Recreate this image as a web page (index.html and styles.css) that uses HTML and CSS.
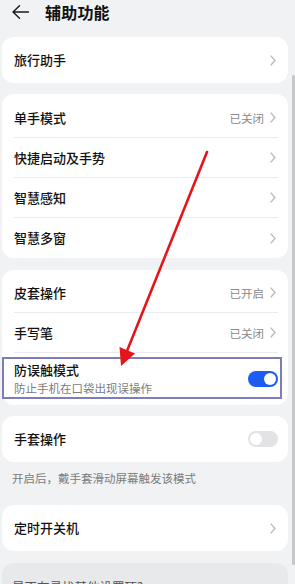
FILE: index.html
```html
<!DOCTYPE html>
<html lang="zh-CN">
<head>
<meta charset="utf-8">
<link rel="stylesheet" href="styles.css">
</head>
<body>
<div class="page">
  <header class="header">
    <svg class="back" width="17" height="14" viewBox="0 0 17 14"><path d="M16.5 7 H1 M7.5 0.8 L1 7 L7.5 13.2" fill="none" stroke="#1a1a1a" stroke-width="1.4" stroke-linecap="round" stroke-linejoin="round"/></svg>
    <h1 class="title">辅助功能</h1>
  </header>

  <main class="list">
    <section class="card">
      <div class="row single"><span class="label">旅行助手</span><span class="end"><svg class="chev" width="6" height="11" viewBox="0 0 6 11"><path d="M1 1 L5 5.5 L1 10" fill="none" stroke="#b9b9b9" stroke-width="1.2" stroke-linecap="round" stroke-linejoin="round"/></svg></span></div>
    </section>

    <section class="card group">
      <div class="row"><span class="label">单手模式</span><span class="end"><span class="value">已关闭</span><svg class="chev" width="6" height="11" viewBox="0 0 6 11"><path d="M1 1 L5 5.5 L1 10" fill="none" stroke="#b9b9b9" stroke-width="1.2" stroke-linecap="round" stroke-linejoin="round"/></svg></span></div>
      <div class="row"><span class="label">快捷启动及手势</span><span class="end"><svg class="chev" width="6" height="11" viewBox="0 0 6 11"><path d="M1 1 L5 5.5 L1 10" fill="none" stroke="#b9b9b9" stroke-width="1.2" stroke-linecap="round" stroke-linejoin="round"/></svg></span></div>
      <div class="row"><span class="label">智慧感知</span><span class="end"><svg class="chev" width="6" height="11" viewBox="0 0 6 11"><path d="M1 1 L5 5.5 L1 10" fill="none" stroke="#b9b9b9" stroke-width="1.2" stroke-linecap="round" stroke-linejoin="round"/></svg></span></div>
      <div class="row last"><span class="label">智慧多窗</span><span class="end"><svg class="chev" width="6" height="11" viewBox="0 0 6 11"><path d="M1 1 L5 5.5 L1 10" fill="none" stroke="#b9b9b9" stroke-width="1.2" stroke-linecap="round" stroke-linejoin="round"/></svg></span></div>
    </section>

    <section class="card group g3">
      <div class="row"><span class="label">皮套操作</span><span class="end"><span class="value">已开启</span><svg class="chev" width="6" height="11" viewBox="0 0 6 11"><path d="M1 1 L5 5.5 L1 10" fill="none" stroke="#b9b9b9" stroke-width="1.2" stroke-linecap="round" stroke-linejoin="round"/></svg></span></div>
      <div class="row"><span class="label">手写笔</span><span class="end"><span class="value">已关闭</span><svg class="chev" width="6" height="11" viewBox="0 0 6 11"><path d="M1 1 L5 5.5 L1 10" fill="none" stroke="#b9b9b9" stroke-width="1.2" stroke-linecap="round" stroke-linejoin="round"/></svg></span></div>
      <div class="row last double">
        <div class="texts"><span class="label">防误触模式</span><span class="sub">防止手机在口袋出现误操作</span></div>
        <span class="toggle on"><span class="knob"></span></span>
      </div>
    </section>

    <section class="card">
      <div class="row single"><span class="label">手套操作</span><span class="toggle"><span class="knob"></span></span></div>
    </section>
    <p class="caption">开启后，戴手套滑动屏幕触发该模式</p>

    <section class="card">
      <div class="row single"><span class="label">定时开关机</span><span class="end"><svg class="chev" width="6" height="11" viewBox="0 0 6 11"><path d="M1 1 L5 5.5 L1 10" fill="none" stroke="#b9b9b9" stroke-width="1.2" stroke-linecap="round" stroke-linejoin="round"/></svg></span></div>
    </section>

    <section class="card muted">
      <p class="hint">是否在寻找其他设置项?</p>
    </section>
  </main>

  <div class="scrollbar"></div>

  <svg class="annot" width="295" height="584" viewBox="0 0 295 584">
    <rect x="3" y="358" width="278" height="40" fill="none" stroke="#7f7cba" stroke-width="2"/>
    <line x1="207" y1="152" x2="127" y2="351" stroke="#e5161b" stroke-width="2.6" stroke-linecap="round"/>
    <polygon points="119.5,347 135,353.4 121,366" fill="#e5161b"/>
  </svg>
</div>
</body>
</html>
```

FILE: styles.css
```css
* { box-sizing: border-box; }
html, body {
  margin: 0;
  padding: 0;
  background: #f1f2f4;
}
body {
  font-family: "Noto Sans CJK SC", "Noto Sans", sans-serif;
  color: #111111;
  width: 295px;
  height: 584px;
  overflow: hidden;
}
.page {
  position: relative;
  width: 295px;
  height: 584px;
  overflow: hidden;
}
.header {
  height: 24px;
  display: flex;
  align-items: center;
  padding-left: 12px;
}
.back {
  display: block;
  margin-right: 16px;
}
.title {
  margin: 0;
  font-size: 16px;
  font-weight: 600;
  line-height: 24px;
  letter-spacing: 0.2px;
}
.list {
  margin-top: 13px;
  padding: 0 7px 0 2px;
  display: flex;
  flex-direction: column;
}
.card {
  background: #ffffff;
  border-radius: 12px;
  margin-bottom: 11px;
}
.group {
  padding-top: 4px;
}
.g3 {
  padding-top: 3px;
  margin-top: 1px;
}
.row {
  height: 40px;
  margin: 0 10px 0 12px;
  display: flex;
  align-items: center;
  justify-content: space-between;
  border-bottom: 1px solid #ebebeb;
}
.row.last { border-bottom: none; }
.row.single {
  height: 46px;
  border-bottom: none;
}
.row.double {
  height: 52px;
  padding-bottom: 1px;
}
.label {
  font-size: 13px;
  line-height: 18px;
  font-weight: 500;
}
.texts {
  display: flex;
  flex-direction: column;
}
.sub {
  font-size: 11.5px;
  line-height: 16px;
  color: #7b7b7b;
  margin-top: 1px;
}
.end {
  display: flex;
  align-items: center;
}
.value {
  font-size: 11.5px;
  color: #8a8a8a;
  margin-right: 6px;
}
.chev {
  display: block;
  margin-right: 2px;
}
.toggle {
  position: relative;
  width: 30px;
  height: 16px;
  border-radius: 8px;
  background: #e3e3e5;
  display: flex;
  align-items: center;
  padding: 0 2px;
}
.toggle .knob {
  width: 12px;
  height: 12px;
  border-radius: 50%;
  background: #ffffff;
}
.toggle.on {
  background: #1d5cf2;
  justify-content: flex-end;
}
.caption {
  margin: 5px 0 19px 10px;
  font-size: 11.5px;
  line-height: 16px;
  color: #7b7b7b;
}
.card + .caption { margin-top: -3px; }
.muted {
  background: #e8e9eb;
  padding: 15px 10px;
  margin-top: 1px;
}
.hint {
  margin: 0;
  font-size: 12.5px;
  line-height: 18px;
  color: #555;
}
.scrollbar {
  position: absolute;
  left: 292px;
  top: 75px;
  width: 3px;
  height: 490px;
  border-radius: 2px;
  background: #c6c7c9;
}
.annot {
  position: absolute;
  left: 0;
  top: 0;
  pointer-events: none;
}
```
